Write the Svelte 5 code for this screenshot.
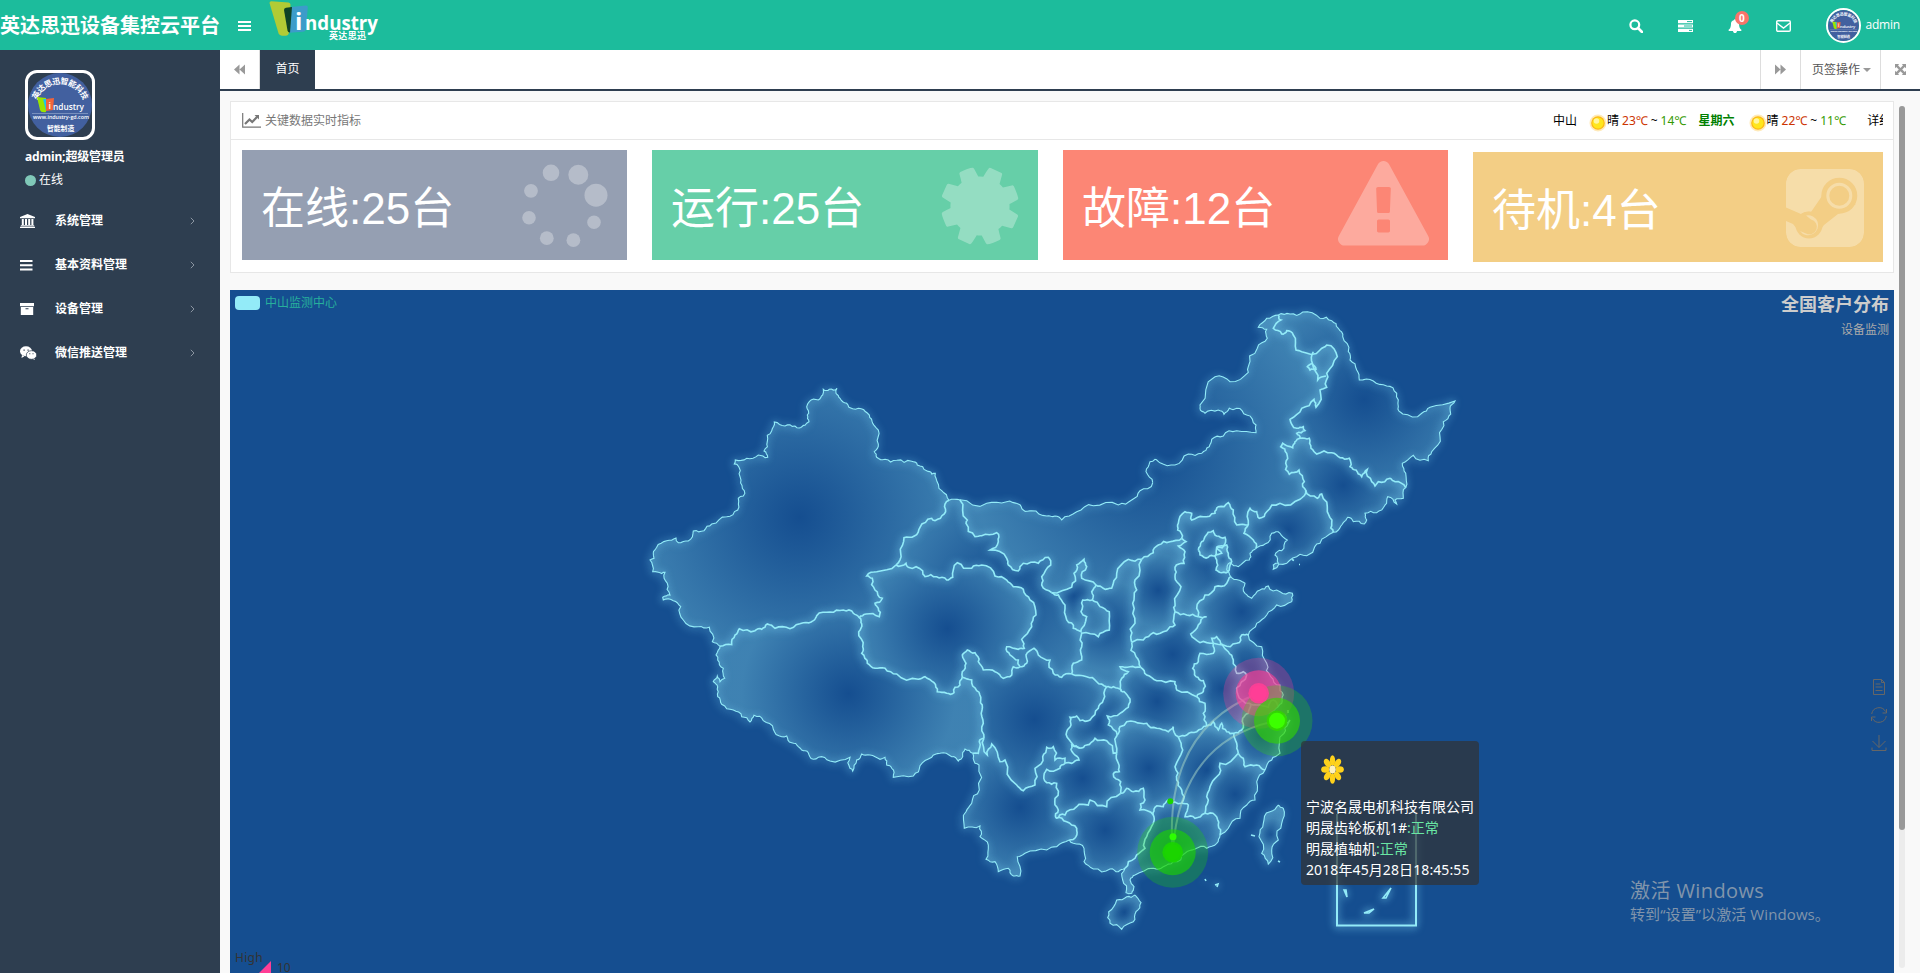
<script lang="ts">
	type Sheet = { x: number; y: number; arcs: Record<string, string> };
	type Point = [number, number];

	const menu = [
		{ icon: 'bank', label: '系统管理' },
		{ icon: 'bars', label: '基本资料管理' },
		{ icon: 'archive', label: '设备管理' },
		{ icon: 'wechat', label: '微信推送管理' }
	];

	const stats = [
		{ kind: 'online', label: '在线', count: 25 },
		{ kind: 'running', label: '运行', count: 25 },
		{ kind: 'fault', label: '故障', count: 12 },
		{ kind: 'standby', label: '待机', count: 4 }
	];

	// borders are digitised in three sheets, each with its own origin, at 3 units per pixel
	const sheets: Sheet[] = [
		{
			x: 400,
			y: 80,
			arcs: {
				xjExt:
					'957,391 935,362 918,325 916,310 905,312 890,302 862,285 845,274 800,271 765,268 740,262 733,245 745,222 745,180 728,160 718,135 705,124 685,115 668,116 650,100 630,85 618,70 621,55 598,58 580,58 578,75 565,90 538,95 530,110 532,135 537,155 525,166 508,174 495,168 465,168 433,156 425,182 412,215 402,243 413,262 385,255 350,265 316,270 313,282 327,292 333,330 343,362 340,378 325,385 323,420 290,440 245,462 222,482 190,483 175,513 145,518 138,504 110,512 80,532 70,550 72,565 60,570 68,605 85,607 105,607 112,640 120,675 98,682 100,690 130,692 152,710 160,750 205,770 238,772 247,815 270,829',
				xjTb: '270,829 305,824 315,795 328,776 375,782 395,778 412,762 435,775 480,776 520,758 550,752 560,737 600,726 640,720 670,730 688,743',
				xjQh: '688,743 708,732 748,740 745,715 735,700 757,685 735,660 727,625 710,618 740,605 798,585',
				xjGs: '798,585 812,550 822,503 853,498 870,472 905,445 915,452 943,432 945,402 957,391',
				tbQh: '688,743 695,762 686,785 698,830 695,850 712,880 735,895 765,895 800,912 865,928 885,920 912,938 922,965 950,970 972,968 975,952 990,945 997,922',
				tbSc: '997,922 1025,930 1040,962 1052,990 1056,1020 1060,1060 1062,1105',
				tbYn: '1062,1105 1048,1115 1045,1150 1028,1150',
				tbExt:
					'1028,1150 1005,1137 998,1160 985,1173 965,1160 930,1150 905,1162 870,1187 850,1218 790,1222 785,1195 770,1185 765,1162 750,1168 720,1155 695,1152 680,1170 668,1203 660,1195 660,1162 600,1173 565,1162 550,1168 535,1148 515,1140 505,1130 485,1118 470,1098 455,1100 430,1078 400,1052 372,1036 360,1056 335,1040 310,1020 275,1003 263,980 263,950 250,935 262,918 270,935 284,925 280,895 263,870 265,840 270,829',
				qhGs: '798,585 828,580 835,592 878,603 885,620 920,620 950,630 968,622 982,578 1025,595 1055,585 1095,618 1130,630 1150,650 1180,658 1200,690 1218,735 1205,770 1175,808 1183,835 1165,838 1130,830 1140,855 1165,870 1170,890',
				qhSc: '1170,890 1150,890 1145,915 1120,925 1095,905 1060,900 1045,875 1035,848 1012,840 997,855 1008,880 997,905 997,922'
			}
		},
		{
			x: 650,
			y: 180,
			arcs: {
				gsExt: '207,91 239,89',
				gsSc: '420,590 440,580 438,555 462,535 475,555 510,570 520,610 545,622 575,612',
				gsNm: '239,89 262,150 258,160 285,200 305,197 350,188 355,215 330,240 380,265 385,285 415,303 430,280 475,280 505,262 512,285 485,320 485,345 515,368',
				nxNm: '515,368 575,352 582,310 590,285 612,268 620,290 605,325 648,345',
				nxSx: '648,345 635,365 637,390',
				nxGs: '637,390 608,390 603,425 620,440 615,460 603,485 580,475 560,450 555,405 535,375 515,368',
				gsSx: '637,390 660,410 688,425 688,480 655,500 605,490 605,530 605,570 580,580 575,612',
				nmSx: '648,345 670,355 695,355 710,310 745,268 785,268',
				nmSn: '785,268 820,248 835,225 870,215 905,205',
				nmHb: '905,205 893,180 895,160 915,125 935,130 935,150 970,140 1005,130 1015,110 1045,98 1060,120 1070,165 1105,165',
				nmLn: '1105,165 1110,115 1130,125 1138,145 1160,125 1200,100 1260,88 1277,60',
				nmExtW: '239,89 320,100 380,95 415,102 430,120 455,122 500,138 525,138 545,150 590,125 640,107 715,105 755,90 780,62 818,38',
				hbSn: '905,205 918,215 895,228 915,245 912,280 885,292 885,320 903,350 885,400 885,425',
				hbHn: '885,425 920,435 955,440',
				hbSd: '955,440 950,415 975,375 1005,350 1040,340 1052,320',
				hbExt: '1052,320 1040,300 1050,278 1075,290 1108,270 1110,250 1128,235',
				bj: '955,240 965,215 975,200 1000,182 1010,198 1035,202 1030,228 1010,232 1005,258 985,262 960,255 955,240',
				tj: '1010,232 1040,225 1045,250 1055,275 1048,300 1025,308 1008,300 1010,270 1005,258 1025,250 1010,232',
				snSx: '785,268 765,330 770,360 758,400 765,460 752,500 755,517',
				snHn: '885,425 885,465 860,482 820,488 790,510 755,517',
				sxHn: '755,517 768,560 782,592',
				hnSd: '955,440 980,440 955,465 932,492 960,518 1000,520',
				sdJs: '1000,520 995,505 1010,500 1030,525 1070,520 1085,495 1105,495',
				sdExt: '1052,320 1075,330 1095,340 1095,370 1115,385 1140,360 1165,348 1200,365 1237,370 1235,395 1190,405 1160,435 1130,460 1105,495',
				hnAh: '1000,520 1000,550 960,550 955,575 938,595 948,620 970,632 970,665 950,680',
				hnHub: '782,592 800,615 830,632 885,635 890,660 950,680',
				jsAh: '1000,520 1045,545 1060,570 1070,610 1090,605 1100,615 1085,635 1070,655 1085,690 1110,700',
				jsExt: '1105,495 1145,530 1160,580 1172,620 1200,645 1210,675 1205,700 1195,710',
				jsZj: '1110,700 1130,705 1165,712 1180,690 1195,710',
				zjAh: '1110,700 1105,730 1088,745 1085,780 1062,790',
				zjExt: '1195,710 1170,730 1215,735 1225,760 1212,790 1200,850 1175,870 1155,900',
				zjJx: '1062,790 1070,820 1075,850',
				zjFj: '1075,850 1090,865 1095,890 1130,885 1155,900',
				ahHub: '950,680 975,700 970,730 980,768',
				ahJx: '980,768 1000,755 1015,780 1025,760 1040,785 1062,790',
				hubJx: '980,768 950,785 920,795 895,800',
				hubSx: '782,592 750,590 720,590 745,605 725,625 725,665',
				sxSc: '575,612 620,620 650,635 680,650',
				cqSx: '680,650 700,650 725,665',
				hubCq: '725,665 745,680 745,712 720,730 682,738 685,765 712,795',
				hubHun: '712,795 720,770 765,755 800,760 830,775 865,785 880,770 895,800',
				cqSc: '680,650 670,690 655,715 630,750 600,752 590,738 570,742 573,765 560,785 572,815 600,835',
				cqGz: '600,835 620,825 645,805 680,812 700,850 710,850',
				cqHun: '710,850 712,795',
				scGz: '600,835 575,825 580,850 597,870 575,880 555,880',
				scYn: '555,880 555,865 525,870 520,830 500,832 488,860 465,895 465,945 430,962 410,945 375,870 360,875 335,822 322,855 312,805',
				gzYn: '555,880 540,895 500,898 493,910 500,938 530,940 525,985 535,1020 528,1045',
				gzHun: '710,850 715,880 718,905 700,912 722,935 722,970',
				gzGx: '528,1045 555,1035 590,1010 625,1005 630,990 680,1010 722,970',
				gxHun: '722,970 740,955 760,965 790,955 795,990 780,1020 820,1035',
				hunJx: '895,800 908,840 885,890 890,930 905,960 905,1000',
				hunGd: '820,1035 825,1012 850,1010 865,990 905,1000',
				jxGd: '905,1000 925,1005 915,1040 945,1045 975,1030',
				jxFj: '1075,850 1020,880 1010,920 990,950 985,990 975,1030',
				fjGd: '975,1030 1005,1035 1015,1065 1020,1095',
				fjExt: '1155,900 1130,935 1125,990 1100,1005 1080,1045 1045,1075 1020,1095',
				gxGd: '820,1035 820,1060 800,1100 795,1135 765,1165 735,1195',
				gdExt: '1020,1095 1010,1120 980,1135 945,1137 915,1150 880,1175 850,1190 820,1195 765,1215 750,1230 762,1250 755,1270 738,1268 728,1230 735,1195',
				ynGx: '528,1045 560,1055 590,1075 588,1100 568,1110',
				gxExt: '568,1110 580,1120 612,1135 612,1175 640,1197 690,1197 715,1205 735,1195',
				ynExt: '278,850 285,880 297,885 298,960 275,1000 258,1025 253,1075 300,1068 300,1100 325,1125 318,1168 345,1175 355,1205 385,1195 400,1218 420,1218 412,1160 435,1150 500,1140 530,1130 568,1110',
				hi: '765,1275 783,1298 768,1325 760,1355 725,1378 690,1360 686,1325 710,1290 740,1280 765,1275',
				tw: '1195,1005 1210,1015 1205,1060 1195,1110 1175,1140 1165,1182 1145,1150 1137,1100 1150,1060 1170,1025 1195,1005'
			}
		},
		{
			x: 890,
			y: 10,
			arcs: {
				nmExtE: '98,548 78,515 90,485 105,478 120,488 165,495 205,462 245,460 268,440 275,418 310,408 350,392 408,398 408,375 380,345 350,325 328,325 312,343 295,330 255,340 240,325 240,315 285,230 330,245 385,217 385,200 412,145 442,115 440,88 415,82 440,55 475,45',
				nmJl: '557,570 548,560 553,545 537,510 508,523 497,490 500,460 482,440 488,430 518,443 525,425 540,415',
				nmHl: '540,415 530,400 555,392 550,380 530,385 510,358 545,325 582,298 588,322 600,270 620,262 620,220 652,170 620,135 600,150 545,155 528,150 520,105 500,92 485,102 460,85 483,60 475,45',
				hlIn: '580,155 577,190 562,200 570,210 588,208 577,190 593,240 618,228',
				hlExt: '475,45 510,42 548,36 600,55 635,62 655,85 668,110 685,155 690,180 710,210 718,240 760,243 800,258 830,280 835,320 848,342 905,340 930,322 1005,303 990,325 992,342 970,365 960,410 935,455 925,482 880,466 847,490 857,520 857,563',
				hlJl: '857,563 825,545 810,535 775,545 765,558 755,545 742,508 725,530 708,510 690,500 688,475 660,473 635,458 590,462 573,445 568,415 540,415',
				jlExt: '857,563 850,595 825,600 830,612 803,590 795,615 770,638 735,640 740,660 733,672 700,665 683,652 670,668 655,690 640,697',
				jlLn: '640,697 635,670 622,635 605,582 592,595 557,570',
				lnExt: '640,697 600,730 578,757 540,763 500,790 460,808 460,795 475,790 465,765 485,752 502,720 480,700 455,700 435,732 408,745',
				lnHb: '408,745 400,720 372,700 385,675'
			}
		}
	];

	// a leading minus walks the arc backwards
	const provinces = [
		'xjExt xjTb xjQh xjGs',
		'-xjTb -tbExt -tbYn -tbSc -tbQh',
		'-xjQh tbQh -qhSc -qhGs',
		'xjGs gsExt gsNm -nxGs gsSx -gsSc -qhGs',
		'gsNm nxNm nmSx nmSn nmHb nmLn nmJl nmHl -nmExtE -nmExtW',
		'nxNm nxSx nxGs',
		'-nxSx nmSx snSx sxHn hubSx -cqSx -sxSc -gsSx',
		'nmSn hbSn snHn -snSx',
		'nmHb -lnHb -hbExt -hbSd -hbHn -hbSn',
		'nmLn -jlLn lnExt lnHb',
		'nmJl -hlJl jlExt jlLn',
		'nmHl hlExt hlJl',
		'hbSd sdExt -sdJs -hnSd',
		'hbHn hnSd hnAh -hnHub -sxHn -snHn',
		'sdJs jsExt -jsZj -jsAh',
		'jsAh zjAh -ahJx -ahHub -hnAh',
		'jsZj zjExt -zjFj -zjJx -zjAh',
		'hnHub ahHub hubJx -hubHun -hubCq -hubSx',
		'gsSc sxSc cqSc scGz scYn -tbSc -qhSc',
		'cqSx hubCq -cqHun -cqGz -cqSc',
		'cqGz gzHun -gzGx -gzYn -scGz',
		'hubHun hunJx -hunGd -gxHun -gzHun cqHun',
		'ahJx zjJx jxFj -jxGd -hunJx -hubJx',
		'zjFj fjExt -fjGd -jxFj',
		'hunGd jxGd fjGd gdExt -gxGd',
		'gzGx gxHun gxGd -gxExt -ynGx',
		'tbYn ynExt -ynGx -gzYn scYn',
		'bj',
		'tj',
		'hi',
		'tw'
	];

	// pushes midpoints sideways so that long segments get a natural ragged edge
	function roughen(points: Point[]): Point[] {
		const out: Point[] = [points[0]];
		for (let i = 1; i < points.length; i++) {
			const [ax, ay] = points[i - 1];
			const [bx, by] = points[i];
			const length = Math.hypot(bx - ax, by - ay);
			if (length > 3) {
				const seed = Math.sin(ax * 12.9898 + by * 78.233) * 43758.5453;
				const push = (seed - Math.floor(seed) - 0.5) * 0.4;
				out.push([(ax + bx) / 2 - (by - ay) * push, (ay + by) / 2 + (bx - ax) * push]);
			}
			out.push([bx, by]);
		}
		return out;
	}

	const arcs: Record<string, Point[]> = {};
	for (const sheet of sheets) {
		for (const [name, text] of Object.entries(sheet.arcs)) {
			const points = text.split(' ').map((pair): Point => {
				const [x, y] = pair.split(',').map(Number);
				return [sheet.x + x / 3, sheet.y + y / 3];
			});
			arcs[name] = roughen(roughen(points));
		}
	}

	const toText = (points: Point[]) => points.map((p) => p[0].toFixed(1) + ',' + p[1].toFixed(1)).join(' ');

	const isCoast = (name: string) => name.includes('Ext') || name === 'tw' || name === 'hi';
	const lines = Object.entries(arcs).map(([name, points]) => ({ coast: isCoast(name), points: toText(points) }));

	const areas = provinces.map((names) => {
		const points = names
			.split(' ')
			.flatMap((name) => (name[0] === '-' ? [...arcs[name.slice(1)]].reverse() : arcs[name]));
		const xs = points.map((p) => p[0]);
		const ys = points.map((p) => p[1]);
		const left = Math.min(...xs);
		const right = Math.max(...xs);
		const top = Math.min(...ys);
		const bottom = Math.max(...ys);
		return {
			points: toText(points),
			cx: (left + right) / 2,
			cy: (top + bottom) / 2,
			r: Math.min(right - left, bottom - top) * 0.8
		};
	});

	const markers = [
		{ x: 1028.7, y: 403.3, color: '#ff3e96', core: '#ff3e96' },
		{ x: 1047, y: 430.7, color: '#32d600', core: '#3cff00' },
		{ x: 942.7, y: 562.3, color: '#1bd400', core: '#1bd400' }
	];

	const petals = [0, 45, 90, 135, 180, 225, 270, 315];
</script>

{#snippet badge()}
	<svg viewBox="0 0 64 64">
		<circle cx="32" cy="32" r="32" fill="#42609f" />
		<path id="badge-arc" d="M9 27a24.500 24.500 0 0 1 46 0" fill="none" />
		<text class="badge-cn" font-size="8"><textPath href="#badge-arc" textLength="60">英达思迅智能科技</textPath></text>
		<path d="M9 24l9 1v14q-5 1-6-2z" fill="#9be500" />
		<path d="M15 26l4 0-1 12z" fill="#1cc4f0" />
		<path d="M18 26l8-1-1 12-7 1z" fill="#f0643c" />
		<text x="20.500" y="36" class="badge-en" font-size="9">i</text>
		<text x="25" y="37" class="badge-en" font-size="8" textLength="31" lengthAdjust="spacingAndGlyphs">ndustry</text>
		<path d="M4 40.500h56" stroke="#9fb0d4" stroke-width=".6" />
		<text x="5" y="46" class="badge-en" font-size="5" textLength="56" lengthAdjust="spacingAndGlyphs">www.industry-gd.com</text>
		<text x="19" y="58" class="badge-cn" font-size="6.800">智能制造</text>
	</svg>
{/snippet}

{#snippet sun()}
	<svg class="sun" viewBox="0 0 18 18">
		<circle cx="9" cy="9" r="8.500" fill="#ffb400" opacity=".28" />
		<circle cx="9" cy="9" r="6.800" fill="#fdb813" />
		<circle cx="9" cy="9" r="5.600" fill="#ffe61c" />
		<circle cx="7.500" cy="7" r="2.800" fill="#fff6a0" />
	</svg>
{/snippet}

<div class="page">
	<header class="topbar">
		<h1>英达思迅设备集控云平台</h1>
		<svg class="toggle" viewBox="0 0 13 11"><path d="M0 1h13M0 5h13M0 9h13" /></svg>
		<svg class="logo" viewBox="0 0 110 42">
			<path d="M.5 3q0-1.800 2-1.700l17 1.200q2 .2 2 2.200l-1.500 28q-.3 2.500-3 3-6 .8-7.500-2.500z" fill="#b1cb35" />
			<path d="M22 7l15-1.500q2 0 1.800 2L37 29q-.3 2.500-3 2.800l-14 1z" fill="#3c9cc9" />
			<path d="M15 10q0-2 2-2.300l6-.7-2 25.500q-2 .5-2.500-2z" fill="#0e4426" />
			<text x="26" y="29.500" class="logo-i">i</text>
			<text x="36" y="29.500" class="logo-en" textLength="73" lengthAdjust="spacingAndGlyphs">ndustry</text>
			<text x="60" y="39" class="logo-cn" textLength="37">英达思迅</text>
		</svg>
		<nav class="tools">
			<span><svg viewBox="0 0 14 14"><circle cx="5.800" cy="5.800" r="4.400" fill="none" stroke="#fff" stroke-width="2.200" /><path d="M9 9l4 4" stroke="#fff" stroke-width="2.600" stroke-linecap="round" /></svg></span>
			<span class="wide"><svg viewBox="0 0 15 12"><path d="M0 0h15v3.200H0zM0 4.400h15v3.200H0zM0 8.800h15V12H0z" fill="#fff" /><path d="M9 1.600h5M6 6h8M11 10.400h3" stroke="#1cbc9c" stroke-width="1" /></svg></span>
			<span class="bell">
				<svg viewBox="0 0 1792 1792"><path fill="#fff" d="M1728 1408q0 52-38 90t-90 38h-448q0 106-75 181t-181 75-181-75-75-181h-448q-52 0-90-38t-38-90q50-42 91-88t85-119.500 74.500-158.500 50-206 19.500-260q0-152 117-282.500t307-158.500q-8-19-8-39 0-40 28-68t68-28 68 28 28 68q0 20-8 39 190 28 307 158.500t117 282.500q0 139 19.500 260t50 206 74.500 158.500 85 119.500 91 88z" /></svg>
				<em>0</em>
			</span>
			<span class="wide"><svg viewBox="0 0 15 12"><rect x=".7" y=".7" width="13.600" height="10.600" rx="1.200" fill="none" stroke="#fff" stroke-width="1.400" /><path d="M1 3l6.500 5L14 3" fill="none" stroke="#fff" stroke-width="1.400" /></svg></span>
		</nav>
		<div class="account">
			<div class="photo">{@render badge()}</div>
			admin
		</div>
	</header>

	<div class="body">
		<aside>
			<div class="profile">
				<div class="portrait">{@render badge()}</div>
				<strong>admin;超级管理员</strong>
				<p><i></i>在线</p>
			</div>
			<ul>
				{#each menu as item}
					<li>
						<svg class="icon" viewBox="0 0 17 14">
							{#if item.icon === 'bank'}
								<path d="M7.500 0L15 3v1.200H0V3zM1.800 5h2v6h-2zM5 5h2v6H5zM8.200 5h2v6h-2zM11.400 5h2v6h-2zM.8 11.300h13.400v1H.8zM0 12.700h15V14H0z" />
							{:else if item.icon === 'bars'}
								<path d="M0 2h12.500v2H0zM0 6.200h12.500v2H0zM0 10.400h12.500v2H0z" />
							{:else if item.icon === 'archive'}
								<path d="M0 1h14v3.200H0zM.8 5h12.400v8H.8zM5.500 6.200v1h3v-1z" fill-rule="evenodd" />
							{:else}
								<ellipse cx="6" cy="5.300" rx="6" ry="5" />
								<path d="M2 9l-.5 3 3-1.800zM14 11l.8 3-3.300-1.600z" />
								<ellipse cx="11.500" cy="9" rx="5.200" ry="4.300" stroke="#2e3e50" stroke-width=".7" />
								<path d="M3.500 3.500h1.200v1.200H3.500zM7.500 3.500h1.200v1.200H7.500zM9.300 7.300h1v1h-1zM12.500 7.300h1v1h-1z" fill="#2e3e50" />
							{/if}
						</svg>
						<span>{item.label}</span>
						<svg class="angle" viewBox="0 0 5 8"><path d="M.8.8L4 4 .8 7.200" /></svg>
					</li>
				{/each}
			</ul>
		</aside>

		<main>
			<div class="tabs">
				<span class="roll left"><svg viewBox="0 0 11 10"><path d="M5.500 0v10L0 5zM11 0v10L5.500 5z" /></svg></span>
				<span class="tab">首页</span>
				<span class="roll"><svg viewBox="0 0 11 10"><path d="M0 0v10l5.500-5zM5.500 0v10L11 5z" /></svg></span>
				<span class="ops">页签操作<i></i></span>
				<span class="roll"><svg viewBox="0 0 11 11"><path d="M0 0h4.200L3 1.300l2.500 2.600L8 1.300 6.800 0H11v4.200L9.700 3 7.200 5.500 9.700 8 11 6.800V11H6.800L8 9.700 5.500 7.200 3 9.700 4.200 11H0V6.800L1.300 8l2.500-2.500L1.300 3 0 4.200z" /></svg></span>
			</div>

			<div class="content">
				<div class="column">
					<section class="card">
						<div class="card-head">
							<svg class="trend" viewBox="0 0 19 15"><path d="M.7 0v14.200H19" fill="none" stroke="#777" stroke-width="1.200" /><path d="M3 11l4.500-4.500 2.700 2.500 5-5.200" fill="none" stroke="#777" stroke-width="2.200" /><path d="M12.500 2H17v4.500z" fill="#777" /></svg>
							<span>关键数据实时指标</span>
							<div class="weather">
								<span class="city">中山</span>
								{@render sun()}晴<b class="hot">23℃</b><b class="mid">~</b><b class="cool">14℃</b>
								<strong>星期六</strong>
								{@render sun()}晴<b class="hot">22℃</b><b class="mid">~</b><b class="cool">11℃</b>
								<span class="more">详细</span>
							</div>
						</div>
						<div class="stats">
							{#each stats as stat}
								<div class="stat {stat.kind}">
									<span>{stat.label}:{stat.count}台</span>
									{#if stat.kind === 'online'}
										<svg width="86" height="84" viewBox="280 14.500 86 84"><circle cx="309" cy="23.300" r="8.300" /><circle cx="336.300" cy="25.300" r="10" /><circle cx="354" cy="45.700" r="11.500" /><circle cx="352" cy="72.700" r="6.800" /><circle cx="331.400" cy="90.700" r="6.900" /><circle cx="304.800" cy="88.700" r="6.900" /><circle cx="287" cy="68.300" r="6.800" /><circle cx="289" cy="41.300" r="6.900" /></svg>
									{:else if stat.kind === 'running'}
										<svg width="78" height="78" viewBox="0 -128 1536 1536"><path transform="rotate(24 768 640)" d="M1024 640q0 106-75 181t-181 75-181-75-75-181 75-181 181-75 181 75 75 181zm512-109v222q0 12-8 23t-20 13l-185 28q-19 54-39 91 35 50 107 138 10 12 10 25t-9 23q-27 37-99 108t-94 71q-12 0-26-9l-138-108q-44 23-91 38-16 136-29 186-7 28-36 28h-222q-14 0-24.500-8.500t-11.500-21.500l-28-184q-49-16-90-37l-141 107q-10 9-25 9-14 0-25-11-126-114-165-168-7-10-7-23 0-12 8-23 15-21 51-66.500t54-70.500q-27-50-41-99l-183-27q-13-2-21-12.500t-8-23.500v-222q0-12 8-23t19-13l186-28q14-46 39-92-40-57-107-138-10-12-10-24 0-10 9-23 26-36 98.500-107.500t94.500-71.500q13 0 26 10l138 107q44-23 91-38 16-136 29-186 7-28 36-28h222q14 0 24.500 8.500t11.500 21.500l28 184q49 16 90 37l142-107q9-9 24-9 13 0 25 10 129 119 165 170 7 8 7 22 0 12-8 23-15 21-51 66.500t-54 70.500q26 50 41 98l183 28q13 2 21 12.500t8 23.500z" /></svg>
									{:else if stat.kind === 'fault'}
										<svg width="91" height="91" viewBox="0 0 1792 1792"><path d="M1024 1375v-190q0-14-9.500-23.500t-22.500-9.500h-192q-13 0-22.500 9.500t-9.500 23.500v190q0 14 9.500 23.500t22.500 9.500h192q13 0 22.500-9.500t9.500-23.500zm-2-374l18-459q0-12-10-19-13-11-24-11h-220q-11 0-24 11-10 7-10 21l17 457q0 10 10 16.500t24 6.500h185q14 0 23.500-6.500t10.500-16.500zm-14-934l768 1408q35 63-2 126-17 29-46.500 46t-63.500 17h-1536q-34 0-63.500-17t-46.500-46q-37-63-2-126l768-1408q17-31 47-49t65-18 65 18 47 49z" /></svg>
									{:else}
										<svg width="78" height="78" viewBox="0 0 78 78">
											<mask id="steam">
												<rect width="78" height="78" rx="14.500" fill="#fff" />
												<path d="M0 38.500L15 45Q20 42 25 43L36 27l34 8-18 10-14 11-3 4-24 0-4-5-7-3z" fill="#000" />
												<circle cx="53.300" cy="26.700" r="18" fill="#000" />
												<circle cx="23" cy="56" r="13.500" fill="#000" />
												<circle cx="53.300" cy="26.700" r="11.500" fill="none" stroke="#fff" stroke-width="3" />
												<path d="M20 46.500a10 10 0 1 1-6 15.500l6 2.500a7.500 7.500 0 1 0 5-14z" fill="#fff" />
											</mask>
											<rect width="78" height="78" rx="14.500" mask="url(#steam)" />
										</svg>
									{/if}
								</div>
							{/each}
						</div>
					</section>

					<section class="map">
						<svg class="chart" viewBox="0 0 1664 683">
							<defs>
								{#each areas as area, i}
									<radialGradient id="area{i}" gradientUnits="userSpaceOnUse" cx={area.cx} cy={area.cy} r={area.r}>
										<stop offset="0" stop-color="#93ebf8" stop-opacity="0" />
										<stop offset=".8" stop-color="#93ebf8" stop-opacity=".33" />
									</radialGradient>
								{/each}
							</defs>
							{#each areas as area, i}
								<polygon points={area.points} fill="url(#area{i})" />
							{/each}
							<g class="borders">
								{#each lines as line}
									<polyline points={line.points} class:coast={line.coast} />
								{/each}
								<path d="M1107 524v111.500h79V524" class="inset" />
								<path d="M1114 600l3 7-1-7zM1153 608l8-10-5 10zM1134 623l10-4-5 4zM1021 545l4 1M1048 571l2 1M975 589l1 2M985 595l3-1-1 3M1062 269.500l2 1M1069 274.500l1 0M1058 420v3M1060 430l-2 3" />
							</g>
							<g class="routes">
								<path d="M942.700 562.300Q933 440 1028.700 403.300" />
								<path d="M942.700 562.300Q950 450 1047 430.700" />
							</g>
							{#each markers as marker}
								<circle cx={marker.x} cy={marker.y} r="35.500" fill={marker.color} opacity=".28" />
								<circle cx={marker.x} cy={marker.y} r="23" fill={marker.color} opacity=".62" />
							{/each}
							{#each markers as marker}
								<circle cx={marker.x} cy={marker.y} r="10.300" fill={marker.color} opacity=".9" />
								<circle cx={marker.x} cy={marker.y} r="8" fill={marker.core} />
							{/each}
							<circle cx="940.300" cy="511.300" r="3" fill="#1bd400" />
							<circle cx="943" cy="546.700" r="3.500" fill="#2dff00" />
							<path d="M41 671v12H29z" fill="#ff3e96" />
						</svg>

						<div class="legend"><i></i>中山监测中心</div>
						<div class="title">
							<h2>全国客户分布</h2>
							<p>设备监测</p>
						</div>
						<div class="toolbox">
							<svg viewBox="0 0 16 16"><path d="M2.500.5h8l3 3v12h-11zM10.500.5v3h3M4.500 5h5M4.500 8h7M4.500 11.500h7" /></svg>
							<svg viewBox="0 0 16 16"><path d="M.7 7A7.400 7.400 0 0 1 14.500 4.500M15.300 9A7.400 7.400 0 0 1 1.500 11.500M15.500 2v4h-4M.5 14v-4h4" /></svg>
							<svg viewBox="0 0 16 16"><path d="M8 0v12.500M1.500 6L8 12.500 14.500 6M1 12.500v3h14v-3" /></svg>
						</div>
						<span class="high">High</span>
						<span class="ten">10</span>
						<div class="tip">
							<svg viewBox="-14.500 -14.500 29 29" preserveAspectRatio="none">
								{#each petals as turn}
									<ellipse cx="0" cy="-9" rx="3.300" ry="5.300" transform="rotate({turn})" fill="#ffd21c" />
								{/each}
								<circle r="4" fill="#fff3c0" />
							</svg>
							<p>宁波名晟电机科技有限公司</p>
							<p>明晟齿轮板机1#<b>:正常</b></p>
							<p>明晟植轴机<b>:正常</b></p>
							<p class="stamp">2018年45月28日18:45:55</p>
						</div>
						<div class="activate">
							<p>激活 Windows</p>
							<small>转到“设置”以激活 Windows。</small>
						</div>
					</section>
				</div>
				<div class="scroll"><i></i></div>
			</div>
		</main>
	</div>
</div>

<style>
	:global(body) {
		overflow: hidden;
	}

	* {
		box-sizing: border-box;
		margin: 0;
		padding: 0;
	}

	svg {
		display: block;
		flex: none;
	}

	.page {
		width: 1920px;
		height: 973px;
		display: flex;
		flex-direction: column;
		overflow: hidden;
		font: 12px/1.5 'Noto Sans', 'Noto Sans CJK SC', sans-serif;
	}

	.topbar {
		height: 50px;
		flex: none;
		display: flex;
		align-items: center;
		background: #1cbc9c;
		color: #fff;
	}

	h1 {
		width: 220px;
		font: bold 20px/50px 'Noto Sans CJK SC', sans-serif;
		white-space: nowrap;
	}

	.toggle {
		width: 13px;
		height: 11px;
		margin: 2px 31px 0 18px;
	}

	.toggle path {
		stroke: #fff;
		stroke-width: 2;
	}

	.logo {
		width: 110px;
		height: 42px;
		margin-left: -13px;
		align-self: flex-start;
	}

	.logo text {
		fill: #fff;
	}

	.logo-i {
		font: bold 24px 'Open Sans', sans-serif;
	}

	.logo-en {
		font: bold 20px 'Open Sans', sans-serif;
	}

	.logo-cn {
		font: bold 9px 'Noto Sans CJK SC', sans-serif;
	}

	.badge-cn {
		fill: #fff;
		font-family: 'Noto Sans CJK SC', sans-serif;
		font-weight: bold;
	}

	.badge-en {
		fill: #fff;
		font-family: 'Open Sans', sans-serif;
		font-weight: 600;
	}

	.tools {
		display: flex;
		margin-left: auto;
	}

	.tools span {
		width: 49.3px;
		height: 50px;
		padding-top: 2px;
		display: flex;
		align-items: center;
		justify-content: center;
		position: relative;
	}

	.tools svg {
		width: 14px;
		height: 14px;
	}

	.tools .wide svg {
		width: 15px;
		height: 12px;
	}

	.tools em {
		position: absolute;
		left: 25px;
		top: 11px;
		width: 14px;
		height: 14px;
		border-radius: 50%;
		background: #f8746a;
		font: bold 10px/14px 'Open Sans', sans-serif;
		text-align: center;
	}

	.account {
		width: 111.500px;
		padding-left: 17px;
		display: flex;
		align-items: center;
		gap: 5px;
		font-family: 'Open Sans', sans-serif;
		line-height: 46px;
		letter-spacing: -0.2px;
	}

	.photo {
		width: 35px;
		height: 35px;
		border: 2px solid #fff;
		border-radius: 50%;
		overflow: hidden;
	}

	.body {
		flex: 1;
		display: flex;
		min-height: 0;
	}

	aside {
		width: 220px;
		background: #2e3e50;
		color: #fff;
	}

	.profile {
		padding: 20px 25px 0;
		height: 149px;
	}

	.portrait {
		width: 70px;
		height: 70px;
		border: 3px solid #fff;
		border-radius: 12px;
	}

	.profile strong {
		display: block;
		margin-top: 8px;
		font-size: 12px;
		line-height: 18px;
		letter-spacing: -0.15px;
	}

	.profile p {
		margin-top: 5px;
		display: flex;
		align-items: center;
		gap: 3px;
		line-height: 18px;
	}

	.profile i {
		width: 11px;
		height: 11px;
		border-radius: 50%;
		background: #80c8b8;
	}

	ul {
		list-style: none;
	}

	li {
		height: 44px;
		padding: 0 25px 0 20px;
		display: flex;
		align-items: center;
		font-weight: bold;
	}

	li span {
		flex: 1;
	}

	.icon {
		width: 17px;
		height: 14px;
		margin-right: 18px;
		fill: #fff;
	}

	.angle {
		width: 5px;
		height: 8px;
	}

	.angle path {
		fill: none;
		stroke: #8b95a1;
	}

	main {
		flex: 1;
		display: flex;
		flex-direction: column;
		background: #f9f9f9;
		min-width: 0;
	}

	.tabs {
		height: 41px;
		flex: none;
		display: flex;
		background: #fff;
		border-bottom: 2px solid #2e3e50;
		line-height: 37px;
	}

	.roll {
		width: 40px;
		border-left: 1px solid #ddd;
		display: flex;
		align-items: center;
		justify-content: center;
	}

	.roll.left {
		border: 0;
		border-right: 1px solid #ddd;
	}

	.roll svg {
		width: 11px;
		height: 11px;
		fill: #999;
	}

	.tab {
		width: 55px;
		margin-right: auto;
		background: #2e3e50;
		color: #fff;
		text-align: center;
	}

	.ops {
		width: 80px;
		padding-left: 11px;
		border-left: 1px solid #ddd;
		display: flex;
		align-items: center;
		gap: 3px;
		color: #555;
	}

	.ops i {
		border: 4px solid transparent;
		border-top-color: #999;
		border-bottom: 0;
	}

	.content {
		flex: 1;
		display: flex;
		padding: 10px 15px 0 10px;
		min-height: 0;
	}

	.column {
		width: 1664px;
		display: flex;
		flex-direction: column;
		gap: 17px;
	}

	.card {
		height: 172px;
		flex: none;
		background: #fff;
		border: 1px solid #e7e7e7;
	}

	.card-head {
		height: 38px;
		padding: 0 10px 0 11px;
		display: flex;
		align-items: center;
		border-bottom: 1px solid #e7e7e7;
		color: #777;
	}

	.trend {
		width: 19px;
		height: 15px;
		margin-right: 4px;
	}

	.weather {
		width: 330px;
		margin-left: auto;
		display: flex;
		align-items: center;
		overflow: hidden;
		white-space: nowrap;
		color: #000;
	}

	.city {
		margin-right: 12px;
	}

	.sun {
		width: 18px;
		height: 18px;
		margin-top: 4px;
	}

	.weather b {
		font-weight: normal;
	}

	.weather .hot {
		width: 26px;
		margin-left: 3px;
		color: #c30;
	}

	.mid {
		width: 7px;
		margin: 0 3px;
	}

	.weather .cool {
		width: 25px;
		color: #390;
	}

	.weather strong {
		margin: 0 14px 0 13px;
		color: green;
	}

	.more {
		margin-left: 22px;
	}

	.stats {
		padding: 10px 10px 0 11px;
		display: grid;
		grid-template-columns: 385px 386px 385px 410px;
		column-gap: 25px;
	}

	.stat {
		height: 110px;
		padding: 2px 19px 0;
		display: flex;
		align-items: center;
		justify-content: space-between;
		color: #fff;
		font: 44px/60px 'Liberation Sans', 'Noto Sans CJK SC', sans-serif;
		white-space: nowrap;
	}

	.stat span {
		padding-top: 6px;
	}

	.stat svg {
		fill: rgba(255, 255, 255, 0.3);
	}

	.online {
		background: #959fb2;
	}

	.running {
		background: #66cfa8;
	}

	.fault {
		background: #fc8675;
	}

	.standby {
		margin-top: 2px;
		background: #f3ce85;
	}

	.map {
		flex: 1;
		position: relative;
		background: #154e90;
		overflow: hidden;
	}

	.chart {
		width: 1664px;
		height: 683px;
	}

	.borders {
		fill: none;
		stroke: #93ebf8;
		stroke-width: 1.6;
		filter: drop-shadow(-1px 1px 4px rgba(128, 217, 248, 0.75)) drop-shadow(0 0 3px rgba(128, 217, 248, 0.3));
	}

	.coast {
		stroke-width: 1.1;
	}

	.inset {
		stroke-width: 2;
	}

	.routes {
		fill: none;
		stroke: #a8d8c8;
		stroke-width: 2;
		opacity: 0.5;
	}

	.legend {
		position: absolute;
		left: 5px;
		top: 4px;
		display: flex;
		align-items: center;
		gap: 5px;
		color: #27b09c;
	}

	.legend i {
		width: 25px;
		height: 14px;
		border-radius: 4px;
		background: #93ebf8;
	}

	.title {
		position: absolute;
		right: 5px;
		top: 2px;
		text-align: right;
		color: #aaa;
	}

	h2 {
		color: #ccc;
		font-size: 18px;
		line-height: 24px;
	}

	.title p {
		margin-top: 5px;
	}

	.toolbox {
		position: absolute;
		right: 7px;
		top: 389px;
		display: grid;
		gap: 12px;
	}

	.toolbox svg {
		width: 16px;
		height: 16px;
		fill: none;
		stroke: #666;
	}

	.high,
	.ten {
		position: absolute;
		color: #333;
	}

	.high {
		left: 5px;
		top: 659px;
		letter-spacing: 0.3px;
	}

	.ten {
		left: 47px;
		top: 669px;
	}

	.tip {
		position: absolute;
		left: 1071px;
		top: 451px;
		width: 178px;
		height: 144px;
		padding: 14px 5px 0;
		border-radius: 4px;
		background: rgba(50, 50, 50, 0.7);
		color: #fff;
		font-size: 14px;
		line-height: 21px;
		white-space: nowrap;
	}

	.tip svg {
		width: 23px;
		height: 29px;
		margin: 0 0 12px 15px;
	}

	.tip b {
		font-weight: normal;
		color: #6ae6a4;
	}

	.stamp {
		letter-spacing: 0.1px;
	}

	.activate {
		position: absolute;
		left: 1400px;
		top: 588px;
		color: #8195ab;
		font-family: 'Open Sans', 'Noto Sans CJK SC', sans-serif;
	}

	.activate p {
		font-size: 20px;
		line-height: 26px;
		letter-spacing: 0.4px;
	}

	.activate small {
		display: block;
		font-size: 15px;
		line-height: 21px;
		letter-spacing: 0.1px;
	}

	.scroll {
		width: 6px;
		height: 862px;
		margin: 5px 0 0 5px;
		border-radius: 3px;
		background: #ececec;
	}

	.scroll i {
		display: block;
		height: 724px;
		border-radius: 3px;
		background: #999;
	}
</style>
